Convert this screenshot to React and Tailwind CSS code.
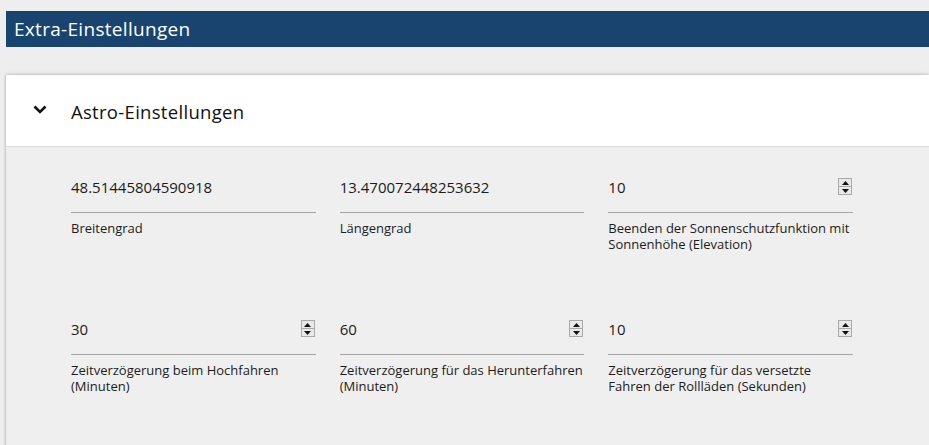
import React from "react";

const fields = [
  { value: "48.51445804590918", label: "Breitengrad" },
  { value: "13.470072448253632", label: "Längengrad" },
  { value: "10", label: "Beenden der Sonnenschutzfunktion mit Sonnenhöhe (Elevation)", spin: true },
  { value: "30", label: "Zeitverzögerung beim Hochfahren (Minuten)", spin: true },
  { value: "60", label: "Zeitverzögerung für das Herunterfahren (Minuten)", spin: true },
  { value: "10", label: "Zeitverzögerung für das versetzte Fahren der Rollläden (Sekunden)", spin: true },
];

const Spinner = () => (
  <div className="flex flex-col w-[14px] h-[17px] border border-[#a9a9a9] bg-[#e9e9e9]">
    <div className="flex-1 flex items-center justify-center border-b border-[#a9a9a9]">
      <svg width="7" height="4" viewBox="0 0 7 4">
        <polygon points="3.5,0 7,4 0,4" fill="#111" />
      </svg>
    </div>
    <div className="flex-1 flex items-center justify-center">
      <svg width="7" height="4" viewBox="0 0 7 4">
        <polygon points="0,0 7,0 3.5,4" fill="#111" />
      </svg>
    </div>
  </div>
);

const Field = ({ value, label, spin }) => (
  <div>
    <div className="h-[44px] border-b border-[#a3a3a3] flex items-start justify-between pt-[6px] pr-[1px]">
      <span className="text-[15px] leading-[24px] text-[#1c1c1c]">{value}</span>
      {spin && (
        <div className="mt-[3px]">
          <Spinner />
        </div>
      )}
    </div>
    <div className="mt-[7px] text-[13px] leading-[16px] text-[#1c1c1c]">{label}</div>
  </div>
);

const App = () => {
  return (
    <div
      className="w-[929px] h-[445px] overflow-hidden bg-[#eeeeee] pt-[11px] pl-[6px]"
      style={{ fontFamily: '"Open Sans", "Noto Sans", sans-serif' }}
    >
      <div className="h-[36px] bg-[#19446f] flex items-center pl-[8px]">
        <span className="text-white text-[19px] tracking-[0.3px]">Extra-Einstellungen</span>
      </div>

      <div className="mt-[28px] shadow-[0_-1px_3px_rgba(0,0,0,0.15),-1px_0_2px_rgba(0,0,0,0.12)]">
        <div className="h-[72px] bg-white border-b border-[#dcdcdc] flex items-center">
          <div className="w-[65px] flex justify-center pl-[2px]">
            <svg width="14" height="9" viewBox="0 0 14 9" className="-mt-[2px]">
              <polyline points="1.5,1.5 7,7 12.5,1.5" fill="none" stroke="#111" strokeWidth="2.6" />
            </svg>
          </div>
          <span className="text-[18.5px] text-[#111] tracking-[0.3px] mt-[2px]">Astro-Einstellungen</span>
        </div>

        <div className="bg-[#efefef] h-[400px] pt-[22px] pl-[65px]">
          <div className="grid grid-cols-3 w-[782px] gap-x-[24px] gap-y-[59px]">
            {fields.map((f, i) => (
              <Field key={i} {...f} />
            ))}
          </div>
        </div>
      </div>
    </div>
  );
};

export default App;
